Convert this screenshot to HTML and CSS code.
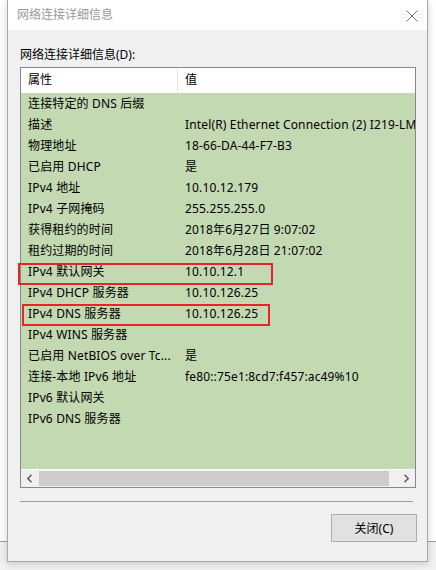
FILE: index.html
```html
<!DOCTYPE html>
<html>
<head>
<meta charset="utf-8">
<link rel="stylesheet" href="styles.css">
</head>
<body>
<div class="window">
  <div class="titlebar">
    <span class="title">网络连接详细信息</span>
    <svg class="close" width="12" height="12" viewBox="0 0 12 12"><path d="M0.5 0.5L11.5 11.5M11.5 0.5L0.5 11.5" stroke="#6f6f6f" stroke-width="1" fill="none"/></svg>
  </div>
  <div class="client">
    <div class="label">网络连接详细信息(D):</div>
    <div class="list">
      <div class="header">
        <div class="hcell first">属性</div>
        <div class="hcell">值</div>
      </div>
      <div class="rows">
        <div class="row"><div class="k">连接特定的 DNS 后缀</div><div class="v"></div></div>
        <div class="row"><div class="k">描述</div><div class="v">Intel(R) Ethernet Connection (2) I219-LM</div></div>
        <div class="row"><div class="k">物理地址</div><div class="v">18-66-DA-44-F7-B3</div></div>
        <div class="row"><div class="k">已启用 DHCP</div><div class="v">是</div></div>
        <div class="row"><div class="k">IPv4 地址</div><div class="v">10.10.12.179</div></div>
        <div class="row"><div class="k">IPv4 子网掩码</div><div class="v">255.255.255.0</div></div>
        <div class="row"><div class="k">获得租约的时间</div><div class="v">2018年6月27日 9:07:02</div></div>
        <div class="row"><div class="k">租约过期的时间</div><div class="v">2018年6月28日 21:07:02</div></div>
        <div class="row"><div class="k">IPv4 默认网关</div><div class="v">10.10.12.1</div></div>
        <div class="row"><div class="k">IPv4 DHCP 服务器</div><div class="v">10.10.126.25</div></div>
        <div class="row"><div class="k">IPv4 DNS 服务器</div><div class="v">10.10.126.25</div></div>
        <div class="row"><div class="k">IPv4 WINS 服务器</div><div class="v"></div></div>
        <div class="row"><div class="k">已启用 NetBIOS over Tc...</div><div class="v">是</div></div>
        <div class="row"><div class="k">连接-本地 IPv6 地址</div><div class="v">fe80::75e1:8cd7:f457:ac49%10</div></div>
        <div class="row"><div class="k">IPv6 默认网关</div><div class="v"></div></div>
        <div class="row"><div class="k">IPv6 DNS 服务器</div><div class="v"></div></div>
      </div>
      <div class="hscroll">
        <div class="arrow"><svg width="7" height="9" viewBox="0 0 7 9"><path d="M5.5 0.8L1.8 4.5L5.5 8.2" stroke="#606060" stroke-width="1.6" fill="none"/></svg></div>
        <div class="track"><div class="thumb"></div></div>
        <div class="arrow"><svg width="7" height="9" viewBox="0 0 7 9"><path d="M1.5 0.8L5.2 4.5L1.5 8.2" stroke="#606060" stroke-width="1.6" fill="none"/></svg></div>
      </div>
    </div>
    <div class="sep"></div>
    <div class="buttons"><button class="btn">关闭(C)</button></div>
  </div>
  <div class="mark mark1"></div>
  <div class="mark mark2"></div>
</div>
</body>
</html>
```
FILE: styles.css
```css
html, body {
  margin: 0;
  padding: 0;
}
body {
  width: 436px;
  height: 570px;
  overflow: hidden;
  background: linear-gradient(to bottom, #ffffff 0, #ffffff 541px, #a0a0a0 541px, #a0a0a0 542px, #f2f2f2 542px);
  font-family: "Noto Sans", "Noto Sans CJK SC", sans-serif;
  font-size: 12px;
  color: #000;
}
.window {
  position: relative;
  margin-left: 7px;
  width: 419px;
  height: 561px;
  border: 1px solid #a8a8a8;
  border-top: none;
  background: #f0f0f0;
  box-shadow: 0 2px 8px rgba(0,0,0,0.18);
  display: flex;
  flex-direction: column;
}
.titlebar {
  height: 30px;
  background: #fff;
  display: flex;
  align-items: center;
  justify-content: space-between;
  padding: 0 9px 0 9px;
}
.title {
  color: #999;
  font-size: 12px;
  line-height: 16px;
}
.close {
  margin-top: 1px;
}
.client {
  flex: 1;
  display: flex;
  flex-direction: column;
  padding: 17px 11px 0 12px;
}
.label {
  line-height: 16px;
  height: 16px;
  margin-bottom: 4px;
}
.list {
  width: 394px;
  height: 419px;
  border: 1px solid #828790;
  background: #c3d9b1;
  display: flex;
  flex-direction: column;
  overflow: hidden;
}
.header {
  height: 25px;
  background: #fff;
  display: flex;
  flex: none;
}
.hcell {
  line-height: 24px;
  padding-left: 7px;
}
.hcell.first {
  width: 149px;
  border-right: 1px solid #e5e5e5;
}
.rows {
  flex: 1;
  overflow: hidden;
}
.row {
  display: flex;
  height: 21px;
  line-height: 21px;
  white-space: nowrap;
  letter-spacing: 0.15px;
}
.k {
  flex: none;
  padding-left: 7px;
  box-sizing: border-box;
  width: 157px;
  overflow: hidden;
}
.v {
  padding-left: 7px;
}
.hscroll {
  flex: none;
  height: 17px;
  background: #f0f0f0;
  display: flex;
  border-top: 1px solid #fdfdfd;
}
.arrow {
  width: 17px;
  flex: none;
  display: flex;
  align-items: center;
  justify-content: center;
}
.track {
  flex: 1;
  padding: 1px 0;
  display: flex;
}
.thumb {
  width: 350px;
  margin-left: 1px;
  background: #cdcdcd;
}
.sep {
  margin-top: 13px;
  width: 393px;
  height: 1px;
  background: #a0a0a0;
}
.buttons {
  display: flex;
  justify-content: flex-end;
  margin-top: 12px;
}
.btn {
  width: 86px;
  height: 28px;
  background: #e1e1e1;
  border: 1px solid #adadad;
  font-family: "Noto Sans", "Noto Sans CJK SC", sans-serif;
  font-size: 12px;
  color: #000;
  padding: 0;
  margin-right: -1px;
}
.mark {
  position: absolute;
  border: 2px solid #e4262b;
  box-sizing: border-box;
}
.mark1 {
  left: 10px;
  top: 263px;
  width: 255px;
  height: 22px;
}
.mark2 {
  left: 14px;
  top: 304px;
  width: 248px;
  height: 22px;
}
```
